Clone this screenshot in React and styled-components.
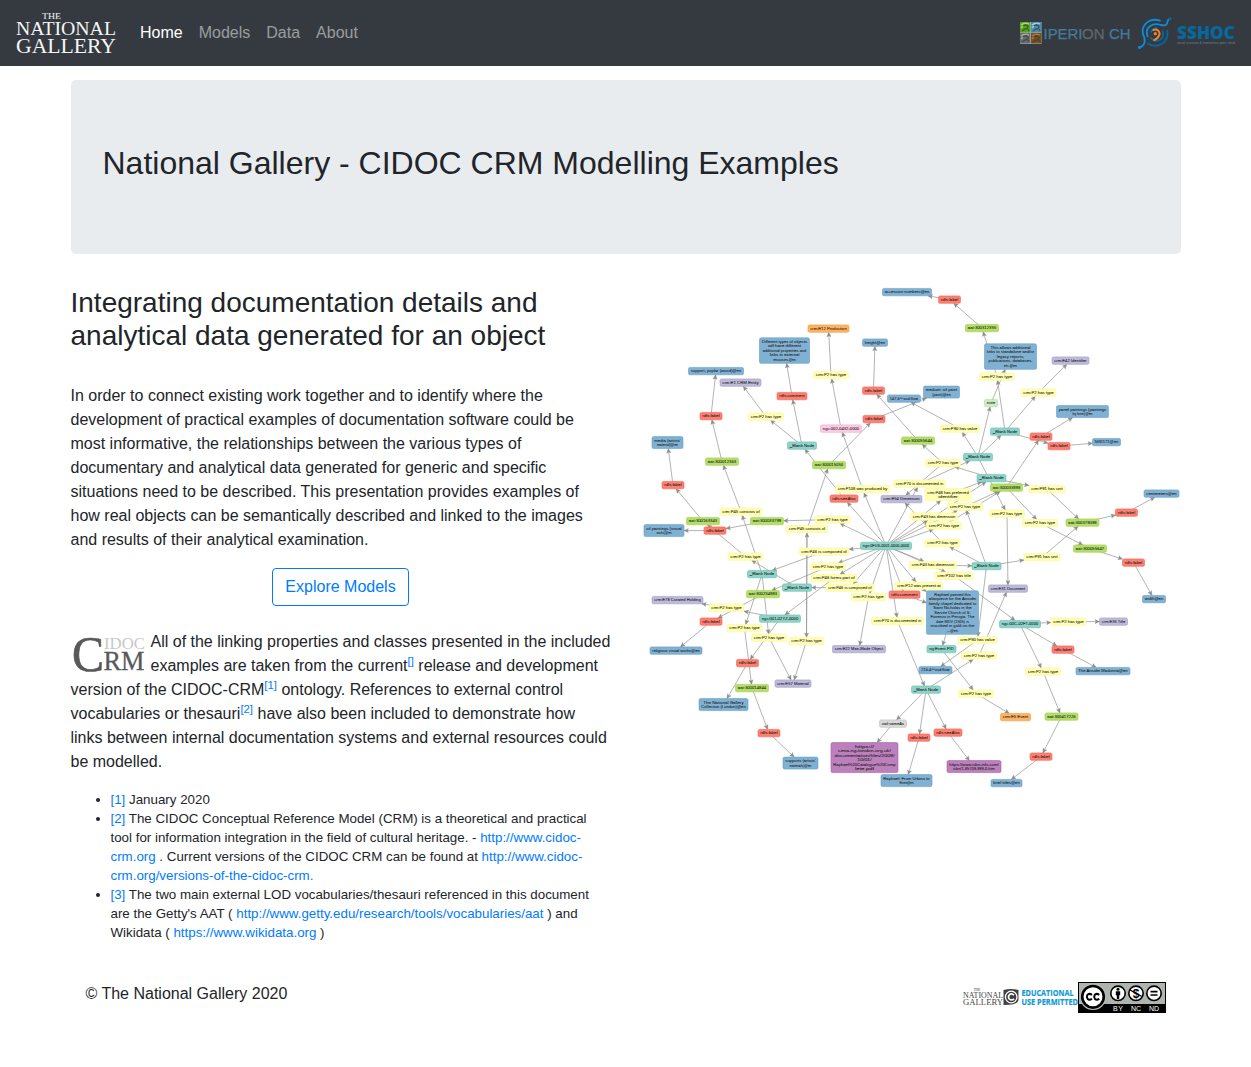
import React from "react";
import styled, { createGlobalStyle } from "styled-components";

const GlobalStyle = createGlobalStyle`
  *, *::before, *::after { box-sizing: border-box; }
  body {
    margin: 0;
    background: #fff;
    color: #212529;
    font: 400 16px/1.5 "Liberation Sans", Arial, sans-serif;
  }
`;

const Navbar = styled.nav`
  display: flex;
  align-items: center;
  height: 66px;
  padding: 0 16px;
  background: #343a40;
`;
const Brand = styled.a`
  display: flex;
  margin-right: 16px;
`;
const NavList = styled.div`
  display: flex;
  flex: 1;
`;
const NavLink = styled.a`
  padding: 8px;
  text-decoration: none;
  color: ${(p) => (p.$active ? "#fff" : "rgba(255,255,255,.5)")};
`;
const Partners = styled.div`
  display: flex;
  align-items: center;
  gap: 7px;
`;
const Container = styled.main`
  width: 1140px;
  margin: 14px auto 0;
  padding: 0 15px;
`;
const Jumbotron = styled.header`
  padding: 64px 32px;
  margin-bottom: 32px;
  border-radius: 5px;
  background: #e9ecef;
`;
const Title = styled.h1`
  margin: 0 0 8px;
  font-size: 32px;
  font-weight: 400;
  line-height: 1.2;
`;
const Row = styled.div`
  display: grid;
  grid-template-columns: 540px 540px;
  gap: 30px;
`;
const Column = styled.section`
  min-width: 0;
`;
const Subtitle = styled.h2`
  margin: 0 0 31.5px;
  font-size: 28px;
  font-weight: 400;
  line-height: 33px;
`;
const Paragraph = styled.p`
  margin: 0 0 16px;
`;
const ButtonRow = styled.div`
  display: flex;
  justify-content: center;
  margin-bottom: 24px;
`;
const Button = styled.a`
  padding: 6px 12px;
  border: 1px solid #007bff;
  border-radius: 4px;
  color: #007bff;
  text-decoration: none;
`;
const Link = styled.a`
  color: #007bff;
  text-decoration: none;
`;
const Sup = styled.sup`
  position: relative;
  top: -0.5em;
  font-size: 11.4px;
  line-height: 0;
  vertical-align: baseline;
`;
const FloatLogo = styled.svg`
  float: left;
  margin: 4px 5px 0 0;
  overflow: visible;
`;
const Notes = styled.ul`
  margin: 0;
  padding-left: 40px;
  font-size: 13.333px;
  line-height: 19px;
`;
const Footer = styled.footer`
  display: flex;
  justify-content: space-between;
  align-items: flex-start;
  margin-top: 40px;
  padding: 0 15px;
`;
const Badges = styled.div`
  display: flex;
  align-items: center;
`;
const Graph = styled.svg`
  display: block;
  width: 540px;
  height: 520px;
`;

const SERIF = '"Liberation Serif", serif';
const SANS = '"Liberation Sans", sans-serif';

const COLORS = {
  b: ["#80b1d3", "#5f9dc8"],
  r: ["#fb8072", "#f96150"],
  g: ["#b3de69", "#9fd444"],
  y: ["#ffffb3", "#fbf59a"],
  t: ["#8dd3c7", "#66bfb0"],
  p: ["#bebada", "#a19bcb"],
  o: ["#fdb462", "#f79a3b"],
  k: ["#fccde5", "#f69fcb"],
  n: ["#ccebc5", "#addda3"],
  s: ["#d9d9d9", "#bdbdbd"],
  v: ["#bc80bd", "#a85ba9"],
};

const has = "crm:P2 has type";
const lab = "rdfs:label";
const blank = "_Blank Node";

const NODES = {
  acc: [907, 292.5, 49, "b", "accession numbers@en"],
  l1: [949.5, 300, 22, "r", lab],
  a1: [982, 328.5, 33, "g", "aat:300312355"],
  allow: [1010.5, 357, 52, "b", "This allows additional|links to standalone and/or|legacy reports,|publications, databases,|etc.@en"],
  e12: [828.5, 329, 41, "o", "crm:E12 Production"],
  diff: [784.5, 351, 50, "b", "Different types of objects|will have different|additional properties and|links to external|resources.@en"],
  height: [875, 343, 25, "b", "height@en"],
  p2z: [831, 375.5, 35, "y", has],
  poplar: [716, 371.5, 55, "b", "support, poplar (wood)@en"],
  e1: [740.5, 383, 41, "p", "crm:E1 CRM Entity"],
  comm1: [792, 396.5, 30, "r", "rdfs:comment"],
  p2y: [766, 417, 35, "y", has],
  l14: [711, 416.5, 22, "r", lab],
  l15: [873.5, 391, 22, "r", lab],
  l16: [874, 419.5, 22, "r", lab],
  f147: [904, 399, 33, "b", "147.6^^xsd:float"],
  ngc0: [841, 429, 41, "k", "ngc:002-0432-0000"],
  bn0: [802, 446, 29, "t", blank],
  media: [667.5, 443, 31, "b", "media (artists'|material)@en"],
  a12: [722, 462, 33, "g", "aat:300012363"],
  p45: [741, 512, 42, "y", "crm:P45 consists of"],
  p2a: [997, 377, 35, "y", has],
  e42: [1070.5, 361, 37, "p", "crm:E42 Identifier"],
  p2b: [1038.5, 393, 35, "y", has],
  note: [991, 403.5, 13, "n", "note"],
  med: [941.5, 392.5, 36, "b", "medium: oil paint|(paint)@en"],
  bn1: [1005, 432, 29, "t", blank],
  bn2: [978, 457.5, 29, "t", blank],
  bn3: [991.5, 478.5, 29, "t", blank],
  p90: [960, 429, 39, "y", "crm:P90 has value"],
  a2: [918, 441, 33, "g", "aat:300055644"],
  panel: [1082.5, 412, 52, "b", "panel paintings (paintings|by form)@en"],
  l2: [1041, 437, 22, "r", lab],
  l3: [1059, 446.5, 22, "r", lab],
  ng: [1106.5, 442.5, 28, "b", "NG1171@en"],
  a3: [829, 465.5, 33, "g", "aat:300015050"],
  p45b: [807, 529.5, 41, "y", "crm:P45 consists of"],
  l4: [673, 485.5, 22, "r", lab],
  a4: [703, 521.5, 33, "g", "aat:300163343"],
  a5: [767, 521.5, 33, "g", "aat:300033799"],
  l5: [715, 531, 22, "r", lab],
  oil: [664, 531, 40, "b", "oil paintings (visual|works)@en"],
  p2c: [832.5, 520, 35, "y", has],
  p2d: [745.5, 557, 35, "y", has],
  bn4: [762, 574.5, 29, "t", blank],
  bn5: [797, 588, 29, "t", blank],
  a6: [763, 594.5, 33, "g", "aat:300234983"],
  p46e: [824, 552, 50, "y", "crm:P46 is composed of"],
  p2e: [828, 567, 35, "y", has],
  p46f: [834, 578.5, 46, "y", "crm:P46 forms part of"],
  p46g: [850, 588, 48, "y", "crm:P46 is composed of"],
  p2f: [868.5, 597.5, 35, "y", has],
  p2g: [943, 463.5, 35, "y", has],
  p70: [919.5, 484, 52, "y", "crm:P70 is documented in"],
  p108: [862.5, 489.5, 54, "y", "crm:P108 was produced by"],
  see: [844, 499, 28, "r", "rdfs:seeAlso"],
  e54: [901.5, 499.5, 41, "p", "crm:E54 Dimension"],
  p48: [948, 495, 46, "y", "crm:P48 has preferred|identifier"],
  p2h: [965, 507, 35, "y", has],
  p43: [934, 517, 47, "y", "crm:P43 has dimension"],
  p2i: [944, 526, 35, "y", has],
  p2j: [942.5, 543.5, 35, "y", has],
  p43b: [933, 565.5, 47, "y", "crm:P43 has dimension"],
  p102: [954, 576, 38, "y", "crm:P102 has title"],
  bn6: [986.5, 566.5, 29, "t", blank],
  p12: [919, 586, 48, "y", "crm:P12 was present at"],
  comm: [904.5, 595, 31, "r", "rdfs:comment"],
  main: [886, 546.3, 51, "t", "ngo:0FUS-0001-0000-0000"],
  ray: [952.5, 613, 52, "b", "Raphael painted this|altarpiece for the Ansidei|family chapel dedicated to|Saint Nicholas in the|Servite Church of S.|Fiorenzo in Perugia. The|date MDV (1505) is|inscribed in gold on the|...@en"],
  p70b: [897.5, 621.5, 52, "y", "crm:P70 is documented in"],
  e31: [1008, 589, 39, "p", "crm:E31 Document"],
  ngc2: [1020, 624.5, 41, "t", "ngc:00C-02FT-0000"],
  p2k: [1068.5, 622, 35, "y", has],
  e35: [1113.5, 622, 28, "p", "crm:E35 Title"],
  a7: [1006.5, 488, 32, "g", "aat:300033898"],
  p2l: [1007, 514, 35, "y", has],
  p91: [1047, 489.5, 36, "y", "crm:P91 has unit"],
  p2m: [1040, 523.5, 35, "y", has],
  a8: [1082.5, 523, 33, "g", "aat:300379098"],
  l6: [1126.5, 513, 22, "r", lab],
  cent: [1161.5, 494, 35, "b", "centimeters@en"],
  a9: [1090, 549, 33, "g", "aat:300055647"],
  l7: [1133.5, 563, 22, "r", lab],
  width: [1154, 599.5, 23, "b", "width@en"],
  p91b: [1042, 557.5, 36, "y", "crm:P91 has unit"],
  e78: [677.5, 600.5, 51, "p", "crm:E78 Curated Holding"],
  p2o: [726.5, 608, 35, "y", has],
  l8: [711, 622, 22, "r", lab],
  ngc3: [780, 619, 41, "t", "ngc:001-02YZ-0000"],
  p2p: [744.5, 628.5, 35, "y", has],
  rel: [676, 651, 52, "b", "religious visual works@en"],
  p2q: [769, 638, 35, "y", has],
  p2r: [806.5, 641.5, 35, "y", has],
  l9: [747.5, 663.5, 22, "r", lab],
  a10: [752, 688.5, 33, "g", "aat:300014844"],
  e57: [793, 684, 36, "p", "crm:E57 Material"],
  tng: [723.5, 705, 49, "b", "The National Gallery|Collection (London)@en"],
  l10: [769, 733.5, 22, "r", lab],
  supp: [800.5, 763.5, 35, "b", "supports (artists'|materials)@en"],
  e22: [859, 649.5, 53, "p", "crm:E22 Man-Made Object"],
  ngE: [941.5, 649.5, 29, "t", "ng:Event PID"],
  p90b: [977.5, 640.5, 39, "y", "crm:P90 has value"],
  p2s: [979, 656, 35, "y", has],
  f216: [935.5, 670.5, 33, "b", "216.4^^xsd:float"],
  bn7: [926, 690, 29, "t", blank],
  p2t: [976, 694, 35, "y", has],
  same: [893, 724, 27, "s", "owl:sameAs"],
  l11: [919, 738, 22, "r", lab],
  see2: [948, 733, 28, "r", "rdfs:seeAlso"],
  pdf: [864.5, 758, 67, "v", "https://|cima.ng-london.org.uk/|documentation/files/2009/|10/01/|Raphael%20Catalogue%20Comp|lete.pdf"],
  urb: [906.5, 781, 51, "b", "Raphael: From Urbino to|Rome@en"],
  isbn: [974, 767, 54, "v", "https://www.isbn-info.com/|isbn/1-85709-999-0.htm"],
  e5: [1015.5, 717.5, 30, "o", "crm:E5 Event"],
  l12: [1063, 650, 22, "r", lab],
  ans: [1103, 671.5, 54, "b", "The Ansidei Madonna@en"],
  p2u: [1043, 672, 35, "y", has],
  a11: [1061.5, 717, 33, "g", "aat:300417226"],
  l13: [1041, 757, 22, "r", lab],
  brief: [1006.5, 783.5, 31, "b", "brief titles@en"],
};

const EDGES = `l1>acc a1>l1 p2a>a1 bn1>p2a bn1>p2b p2b>e42 note>allow bn2>note bn2>bn1 bn2>p90 p90>f147
bn1>l3 l3>ng l2>panel a7>l2 p2z>e12 ngc0>p2z l15>height a2>l15 p2g>a2 l16>med a3>l16 comm1>diff bn0>comm1 bn0>p2y
p2y>e1 l14>poplar a12>l14 p45>a12 bn4>p45 see>bn0 main>see main>p108 p108>ngc0 p45b>a3 p2r>p45b p2c>a5 main>p2c
a5>l5 l5>oil a4>l4 l4>media p2d>a4 bn5>p2d main>p46e p46e>bn4 main>p2e p2e>a6 main>p46f p46f>ngc3 main>p46g
p46g>bn5 main>p2f p2f>e22 a6>l8 l8>rel ngc3>p2o p2o>e78 bn4>p2p p2p>a10 bn4>p2q p2q>e57 p45b>p2r p2r>e57 ngc3>l9
l9>tng a10>l10 l10>supp main>p70 p70>bn2 main>p48 p48>bn3 main>p43 p43>bn3 main>p2i p2i>a7 p2h>a7 main>p2h
bn3>p2g p2g>e54 bn6>p2j p2j>e54 bn6>p2h main>p43b p43b>bn6 main>p102 p102>ngc2 main>p12 main>comm comm>ray p12>ray
main>p70b p70b>bn7 bn2>p2l p2l>e31 bn3>p91 p91>a8 a7>p2m p2m>a9 a9>l7 l7>width a8>l6 l6>cent bn6>p91b p91b>a8
bn6>p90b p90b>f216 ray>ngE ngE>p2t p2t>e5 bn7>p2s p2s>e31 bn7>same same>pdf bn7>l11 l11>urb bn7>see2 see2>isbn
ngc2>p2k p2k>e35 ngc2>l12 l12>ans ngc2>p2u p2u>a11 a11>l13 l13>brief`
  .split(/\s+/)
  .map((e) => e.split(">"));

const nodeHeight = (label) => {
  const n = label.split("|").length;
  return n === 1 ? 7.4 : n * 4.5 + 3;
};

function Edge({ from, to }) {
  const [x1, y1] = NODES[from];
  const [x2, y2, w, , label] = NODES[to];
  const dx = x2 - x1;
  const dy = y2 - y1;
  const t = Math.min(
    dx ? w / 2 / Math.abs(dx) : Infinity,
    dy ? nodeHeight(label) / 2 / Math.abs(dy) : Infinity,
    1
  );
  const x = x2 - dx * t;
  const y = y2 - dy * t;
  const angle = (Math.atan2(dy, dx) * 180) / Math.PI;
  return (
    <g stroke="#929292" fill="#8c8c8c">
      <line x1={x1} y1={y1} x2={x} y2={y} strokeWidth=".7" />
      <path d="M0 0L-4.4-2.1-3.6 0-4.4 2.1Z" strokeWidth=".3" transform={`translate(${x} ${y}) rotate(${angle})`} />
    </g>
  );
}

function GraphNode({ data }) {
  const [x, y, w, kind, label] = data;
  const lines = label.split("|");
  const h = nodeHeight(label);
  const longest = Math.max(...lines.map((l) => l.length));
  const [fill, stroke] = COLORS[kind];
  return (
    <g>
      <rect x={x - w / 2} y={y - h / 2} width={w} height={h} rx="1.6" fill={fill} stroke={stroke} strokeWidth=".6" />
      {lines.map((line, i) => (
        <text
          key={i}
          x={x}
          y={y + 1.4 + (i - (lines.length - 1) / 2) * 4.5}
          textAnchor="middle"
          textLength={((w - 4.6) * line.length) / longest}
          lengthAdjust="spacingAndGlyphs"
          fontSize="4.4"
          fontFamily={SANS}
          fill="#1c1c1c"
          stroke="#1c1c1c"
          strokeWidth=".06"
        >
          {line}
        </text>
      ))}
    </g>
  );
}

function ModelGraph() {
  return (
    <Graph viewBox="641 286.4 540 520" overflow="visible">
      {EDGES.map(([a, b]) => (
        <Edge key={a + b} from={a} to={b} />
      ))}
      {Object.entries(NODES).map(([id, n]) => (
        <GraphNode key={id} data={n} />
      ))}
    </Graph>
  );
}

function GalleryLogo() {
  return (
    <svg width="100" height="42" viewBox="0 0 100 42" overflow="visible" fill="#f4f5f5" fontFamily={SERIF}>
      <text x="26" y="7" fontSize="8.5" textLength="19" lengthAdjust="spacingAndGlyphs">THE</text>
      <text x="0" y="23" fontSize="19" textLength="100" lengthAdjust="spacingAndGlyphs">NATIONAL</text>
      <text x="0" y="40.5" fontSize="21.5" textLength="100" lengthAdjust="spacingAndGlyphs">GALLERY</text>
    </svg>
  );
}

function IperionLogo() {
  const tiles = [
    [0, 0, "#55a51c", "#b1d66e"],
    [11, 0, "#4d8ab0", "#a5cce0"],
    [0, 11, "#686d70", "#a3a6a8"],
    [11, 11, "#7b4d23", "#ad7435"],
  ];
  return (
    <svg width="110" height="22" viewBox="0 0 110 22" overflow="visible">
      <rect width="21.5" height="22" fill="#9eb7ad" />
      {tiles.map(([x, y, dark, light]) => (
        <g key={`${x}-${y}`} transform={`translate(${x} ${y})`}>
          <rect width="10.3" height="10.5" fill={dark} />
          <path d="M1 3Q4 0 9 2M1 6L3 4" fill="none" stroke={light} strokeWidth="1.5" />
          <path d="M3 4Q6 2 8 4Q8 7 5 7L2 9M8 7L9 9" fill="none" stroke="#303b38" strokeWidth="1.3" opacity=".65" />
        </g>
      ))}
      <g fontFamily={SANS} fontSize="15" strokeWidth=".25">
        <text x="23.5" y="16.5" textLength="39" lengthAdjust="spacingAndGlyphs" fill="#467a9d" stroke="#467a9d">IPERI</text>
        <text x="62" y="16.5" textLength="22.5" lengthAdjust="spacingAndGlyphs" fill="#60676d" stroke="#60676d">ON</text>
        <text x="89" y="16.5" textLength="21.5" lengthAdjust="spacingAndGlyphs" fill="#467a9d" stroke="#467a9d">CH</text>
      </g>
    </svg>
  );
}

function SshocLogo() {
  return (
    <svg width="98" height="34" viewBox="0 0 98 34" overflow="visible">
      <g transform="scale(.33333) translate(-411 -48)" fill="none" strokeLinecap="round" strokeWidth="5.5">
        <path d="M419 142Q433 138 434 123Q435 114 430 105Q423 84 438 70Q456 54 480 62" stroke="#0b8ed6" />
        <path d="M443 109Q435 90 450 79Q464 68 482 75Q502 80 502 66Q503 59 510 56" stroke="#0b8ed6" />
        <path d="M453 96Q457 86 470 84M502 92Q506 118 485 132Q464 143 445 131M453 113Q462 128 480 120Q493 111 488 94" stroke="#08689d" />
        <path d="M460 90Q476 85 479 101Q476 114 463 120" stroke="#f58220" strokeWidth="6" />
        <circle cx="419" cy="142" r="5" fill="#0b8ed6" />
        <circle cx="510" cy="56" r="4.5" fill="#08689d" />
        <circle cx="466" cy="101" r="5" fill="#f58220" />
      </g>
      <text x="40" y="23" fontFamily='"Open Sans", sans-serif' fontWeight="800" fontSize="17" textLength="58" lengthAdjust="spacingAndGlyphs" fill="#08689d">SSHOC</text>
      <text x="40" y="27.5" fontFamily={SANS} fontSize="3.2" textLength="58" lengthAdjust="spacingAndGlyphs" fill="#72838d">social sciences &amp; humanities open cloud</text>
    </svg>
  );
}

function CidocLogo() {
  return (
    <FloatLogo width="75" height="40" viewBox="0 0 75 40" fontFamily={SERIF}>
      <text x="1" y="37.4" fontSize="51" textLength="32" lengthAdjust="spacingAndGlyphs" fill="#58595b" stroke="#58595b" strokeWidth=".7">C</text>
      <text x="33" y="14.6" fontSize="17.5" textLength="41" lengthAdjust="spacingAndGlyphs" fill="#c7c8ca">IDOC</text>
      <text x="32.5" y="36.2" fontSize="27" textLength="41" lengthAdjust="spacingAndGlyphs" fill="#58595b" stroke="#58595b" strokeWidth=".3">RM</text>
    </FloatLogo>
  );
}

function EducationalBadge() {
  return (
    <svg width="115" height="18" viewBox="0 0 115 18" overflow="visible">
      <g fontFamily={SERIF} fill="#444">
        <text x="10.5" y="3" fontSize="4" textLength="7">THE</text>
        <text x="0" y="9.5" fontSize="8.4" textLength="40" lengthAdjust="spacingAndGlyphs">NATIONAL</text>
        <text x="0" y="17" fontSize="9" textLength="40" lengthAdjust="spacingAndGlyphs">GALLERY</text>
      </g>
      <path d="M40.5 2Q48 0 55.5 2V12Q55 17 40.5 17Z" fill="#414141" />
      <circle cx="48.2" cy="9" r="5.8" fill="none" stroke="#fff" strokeWidth="1.3" />
      <path d="M51 7.2Q48.5 4.8 46.2 7Q44.7 9.1 46.3 11Q48.6 13 51 10.8" fill="none" stroke="#fff" strokeWidth="1.6" />
      <g fontFamily='"Open Sans", sans-serif' fontWeight="700" fontSize="9.2" fill="#1399d5" stroke="#1399d5" strokeWidth=".2">
        <text x="58.5" y="8" textLength="52" lengthAdjust="spacingAndGlyphs">EDUCATIONAL</text>
        <text x="58.5" y="16.5" textLength="56.5" lengthAdjust="spacingAndGlyphs">USE PERMITTED</text>
      </g>
    </svg>
  );
}

function CreativeCommonsBadge() {
  return (
    <svg width="88" height="31" viewBox="0 0 88 31">
      <rect x=".5" y=".5" width="87" height="30" fill="#afb4ae" stroke="#000" />
      <rect x="1" y="22" width="86" height="8" fill="#000" />
      <circle cx="15" cy="14.8" r="13.2" fill="#b7bbb5" />
      <circle cx="15" cy="14.8" r="10.8" fill="#fff" stroke="#000" strokeWidth="2.6" />
      <g fill="none" stroke="#000" strokeWidth="2">
        <path d="M14 12.8Q11 10.8 9.3 13Q8.3 15 9.7 17Q11.4 18.6 14 16.7" />
        <path d="M21.3 12.8Q18.3 10.8 16.6 13Q15.6 15 17 17Q18.7 18.6 21.3 16.7" />
      </g>
      {[40, 58, 76].map((x) => (
        <circle key={x} cx={x} cy="11.3" r="7.2" fill="#fff" stroke="#000" strokeWidth="1.6" />
      ))}
      <circle cx="40" cy="7.3" r="1.5" />
      <path d="M37.8 9.2H42.2V13.3H41.2V17H38.8V13.3H37.8Z" />
      <text x="58" y="15.6" textAnchor="middle" fontFamily={SANS} fontWeight="700" fontSize="12">$</text>
      <path d="M52 8L64 14.5" stroke="#000" strokeWidth="1.3" />
      <path d="M72.5 9.7H79.5M72.5 13H79.5" stroke="#000" strokeWidth="1.7" />
      <g fontFamily={SANS} fontSize="7" fill="#fff" textAnchor="middle">
        <text x="40" y="28.7" textLength="10">BY</text>
        <text x="58" y="28.7" textLength="10">NC</text>
        <text x="76" y="28.7" textLength="10">ND</text>
      </g>
    </svg>
  );
}

export default function App() {
  return (
    <>
      <GlobalStyle />
      <Navbar>
        <Brand><GalleryLogo /></Brand>
        <NavList>
          <NavLink $active>Home</NavLink>
          <NavLink>Models</NavLink>
          <NavLink>Data</NavLink>
          <NavLink>About</NavLink>
        </NavList>
        <Partners>
          <IperionLogo />
          <SshocLogo />
        </Partners>
      </Navbar>
      <Container>
        <Jumbotron>
          <Title>National Gallery - CIDOC CRM Modelling Examples</Title>
        </Jumbotron>
        <Row>
          <Column>
            <Subtitle>Integrating documentation details and analytical data generated for an object</Subtitle>
            <Paragraph>
              In order to connect existing work together and to identify where the development of practical examples of
              documentation software could be most informative, the relationships between the various types of
              documentary and analytical data generated for generic and specific situations need to be described. This
              presentation provides examples of how real objects can be semantically described and linked to the images
              and results of their analytical examination.
            </Paragraph>
            <ButtonRow><Button>Explore Models</Button></ButtonRow>
            <Paragraph>
              <CidocLogo />
              All of the linking properties and classes presented in the included examples are taken from the
              current<Sup><Link>[]</Link></Sup> release and development version of the
              CIDOC-CRM<Sup><Link>[1]</Link></Sup> ontology. References to external control vocabularies or
              thesauri<Sup><Link>[2]</Link></Sup> have also been included to demonstrate how links between internal
              documentation systems and external resources could be modelled.
            </Paragraph>
            <Notes>
              <li><Link>[1]</Link> January 2020</li>
              <li>
                <Link>[2]</Link> The CIDOC Conceptual Reference Model (CRM) is a theoretical and practical tool for
                information integration in the field of cultural heritage. - <Link>http://www.cidoc-crm.org</Link> .
                Current versions of the CIDOC CRM can be found at{" "}
                <Link>http://www.cidoc-crm.org/versions-of-the-cidoc-crm.</Link>
              </li>
              <li>
                <Link>[3]</Link> The two main external LOD vocabularies/thesauri referenced in this document are the
                Getty's AAT ( <Link>http://www.getty.edu/research/tools/vocabularies/aat</Link> ) and Wikidata ({" "}
                <Link>https://www.wikidata.org</Link> )
              </li>
            </Notes>
          </Column>
          <Column><ModelGraph /></Column>
        </Row>
        <Footer>
          <span>© The National Gallery 2020</span>
          <Badges>
            <EducationalBadge />
            <CreativeCommonsBadge />
          </Badges>
        </Footer>
      </Container>
    </>
  );
}
